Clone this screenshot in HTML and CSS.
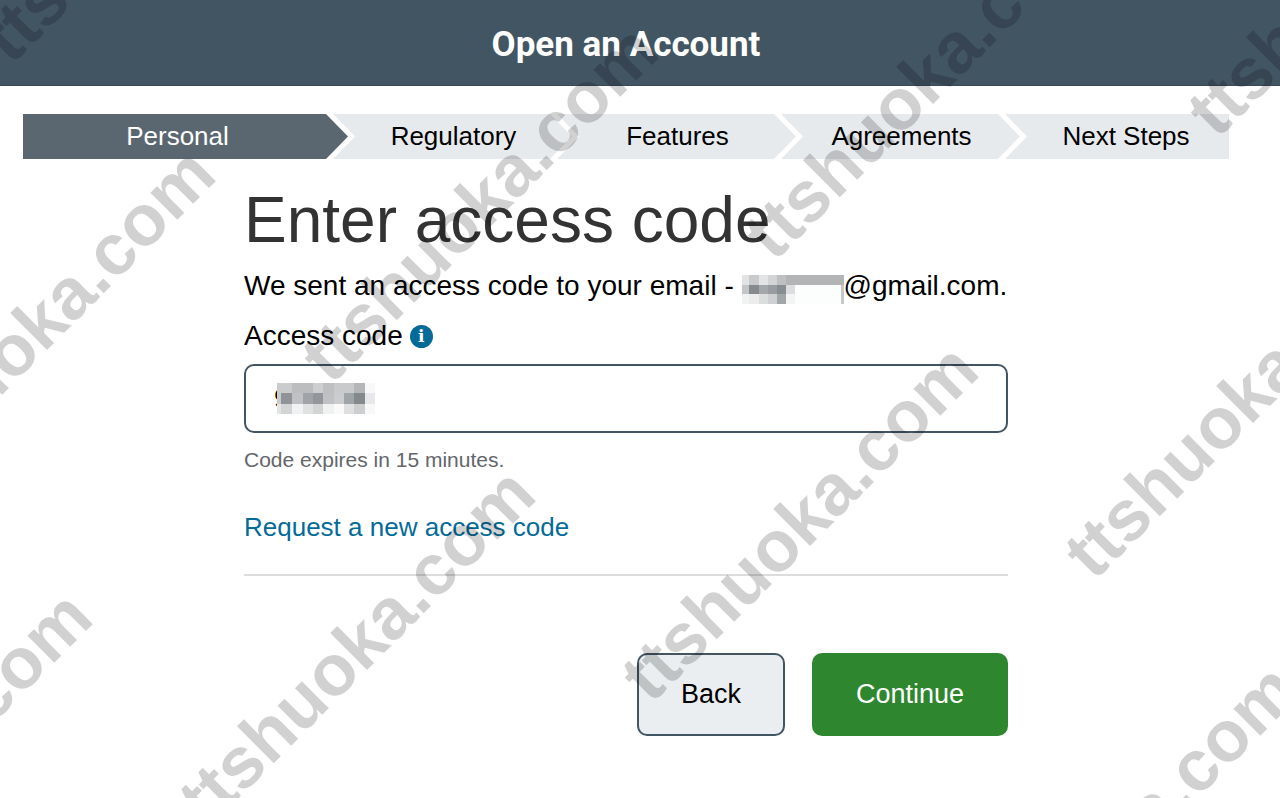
FILE: index.html
```
<!DOCTYPE html>
<html lang="en">
<head>
    <meta charset="UTF-8">
    <meta name="viewport" content="width=device-width, initial-scale=1.0">
    <title>Open an Account</title>
    <link rel="stylesheet" href="styles.css">
</head>
<body>
    <header class="header">
        <div class="title">Open an Account</div>
    </header>

    <ol class="steps">
        <li class="step first active" aria-current="step"><span>Personal</span></li>
        <li class="step"><span>Regulatory</span></li>
        <li class="step"><span>Features</span></li>
        <li class="step"><span>Agreements</span></li>
        <li class="step last"><span>Next Steps</span></li>
    </ol>

    <main class="content">
        <form class="form">
            <h1>Enter access code</h1>
            <p class="message">We sent an access code to your email - <svg class="masked-email" viewBox="0 0 104 29" preserveAspectRatio="none" shape-rendering="crispEdges" aria-hidden="true">
                <path fill="#e2e3e4" d="M0 0h7v10H0z"/>
                <path fill="#c8cacb" d="M7 0h10v10H7z"/>
                <path fill="#e3e4e5" d="M17 0h9v10h-9z"/>
                <path fill="#d3d4d5" d="M26 0h10v10H26z"/>
                <path fill="#bfc0c1" d="M36 0h9v10h-9z"/>
                <path fill="#b2b4b5" d="M45 0h59v10H45z"/>
                <path fill="#c3c5c6" d="M0 10h7v9H0z"/>
                <path fill="#858a8e" d="M7 10h10v9H7z"/>
                <path fill="#a5a8ab" d="M17 10h9v9h-9z"/>
                <path fill="#989b9f" d="M26 10h10v9H26z"/>
                <path fill="#888d91" d="M36 10h9v9h-9z"/>
                <path fill="#dcdddf" d="M45 10h9v9h-9z"/>
                <path fill="#f1f2f2" d="M0 19h7v10H0z"/>
                <path fill="#ececed" d="M7 19h10v10H7z"/>
                <path fill="#dcdddd" d="M17 19h9v10h-9z"/>
                <path fill="#cfd0d1" d="M26 19h10v10H26z"/>
                <path fill="#a3a6a8" d="M36 19h9v10h-9z"/>
                <path fill="#f3f4f4" d="M45 19h9v10h-9z"/>
                <path fill="#fcfdfd" d="M54 10h47v19H54z"/>
                <path fill="#c5c7c8" d="M101 10h3v19h-3z"/>
            </svg>@gmail.com.</p>

            <div class="label-row">
                <label for="code">Access code</label>
                <button type="button" class="info" aria-label="About the access code">i</button>
            </div>
            <div class="field">
                <input type="text" id="code" value="9" autocomplete="off">
                <svg class="masked-code" viewBox="0 0 98 31" shape-rendering="crispEdges" aria-hidden="true">
                    <path fill="#c9cbcc" d="M0 0h15v10H0z"/>
                    <path fill="#bbbdbe" d="M15 0h21v10H15z"/>
                    <path fill="#cdcecf" d="M36 0h10v10H36z"/>
                    <path fill="#bdbfc0" d="M46 0h11v10H46z"/>
                    <path fill="#c8cacb" d="M57 0h20v10H57z"/>
                    <path fill="#b4b6b7" d="M77 0h11v10H77z"/>
                    <path fill="#f8f8f8" d="M88 0h10v10H88z"/>
                    <path fill="#c9cbcc" d="M0 10h4v11H0z"/>
                    <path fill="#909499" d="M4 10h11v11H4z"/>
                    <path fill="#bfc1c4" d="M15 10h11v11H15z"/>
                    <path fill="#a1a3a6" d="M26 10h10v11H26z"/>
                    <path fill="#93979c" d="M36 10h10v11H36z"/>
                    <path fill="#bfc1c2" d="M46 10h11v11H46z"/>
                    <path fill="#cacccd" d="M57 10h10v11H57z"/>
                    <path fill="#a0a5a8" d="M67 10h10v11H67z"/>
                    <path fill="#84898c" d="M77 10h11v11H77z"/>
                    <path fill="#e6e8ea" d="M88 10h10v11H88z"/>
                    <path fill="#e3e4e5" d="M0 21h4v10H0z"/>
                    <path fill="#d3d4d4" d="M4 21h11v10H4z"/>
                    <path fill="#f1f2f3" d="M15 21h11v10H15z"/>
                    <path fill="#e0e1e2" d="M26 21h10v10H26z"/>
                    <path fill="#d3d5d5" d="M36 21h10v10H36z"/>
                    <path fill="#f0f2f2" d="M46 21h11v10H46z"/>
                    <path fill="#fafafa" d="M57 21h10v10H57z"/>
                    <path fill="#dfe0e1" d="M67 21h10v10H67z"/>
                    <path fill="#cdcecf" d="M77 21h11v10H77z"/>
                    <path fill="#f8f8f8" d="M88 21h10v10H88z"/>
                </svg>
            </div>
            <p class="hint">Code expires in 15 minutes.</p>
            <a class="resend" href="#">Request a new access code</a>
            <hr>
            <div class="buttons">
                <button type="button" class="btn back">Back</button>
                <button type="submit" class="btn continue">Continue</button>
            </div>
        </form>
    </main>

    <svg class="watermark" aria-hidden="true">
        <text transform="translate(11 66) rotate(-45)">ttshuoka.com</text>
        <text transform="translate(-112 509) rotate(-45)">ttshuoka.com</text>
        <text transform="translate(331 386) rotate(-45)">ttshuoka.com</text>
        <text transform="translate(774 263) rotate(-45)">ttshuoka.com</text>
        <text transform="translate(1217 140) rotate(-45)">ttshuoka.com</text>
        <text transform="translate(-235 952) rotate(-45)">ttshuoka.com</text>
        <text transform="translate(208 829) rotate(-45)">ttshuoka.com</text>
        <text transform="translate(651 705) rotate(-45)">ttshuoka.com</text>
        <text transform="translate(1094 582) rotate(-45)">ttshuoka.com</text>
        <text transform="translate(971 1025) rotate(-45)">ttshuoka.com</text>
    </svg>
</body>
</html>
```
FILE: styles.css
```
* {
    box-sizing: border-box;
}
body {
    margin: 0;
    font-family: "Liberation Sans", Arial, sans-serif;
    font-size: 28px;
    color: #000;
    background-color: #fff;
}
.header {
    padding: 24px 28px 20px 0;
    background-color: #425563;
    border-bottom: 1px solid #384a58;
}
.title {
    color: #fff;
    font-family: Roboto, sans-serif;
    font-size: 35px;
    font-weight: 700;
    line-height: 41px;
    text-align: center;
}

/* progress steps */
.steps {
    display: flex;
    margin: 28px 51px 0 23px;
    padding: 0;
    list-style: none;
    font-size: 26px;
    line-height: 45px;
    text-align: center;
}
.step {
    flex: 239 1 0;
    min-width: 0;
    margin-left: -15px;
    background-color: #e7eaed;
    clip-path: polygon(0 0, calc(100% - 22px) 0, 100% 50%, calc(100% - 22px) 100%, 0 100%, 22px 50%);
}
.step.first {
    flex-grow: 325;
    margin-left: 0;
    clip-path: polygon(0 0, calc(100% - 22px) 0, 100% 50%, calc(100% - 22px) 100%, 0 100%);
}
.step.last {
    flex-grow: 224;
    clip-path: polygon(0 0, 100% 0, 100% 100%, 0 100%, 22px 50%);
}
.step.active {
    color: #fff;
    background-color: #5b6770;
}
.step span {
    display: block;
    padding-left: 2px;
}
.step.first span {
    padding: 0 16px 0 0;
}
.step.last span {
    padding-left: 18px;
}

/* form */
.content {
    padding-right: 28px;
}
.form {
    max-width: 764px;
    margin: 0 auto;
}
h1 {
    margin: 25px 0 10px;
    color: #333;
    font-size: 64px;
    font-weight: 400;
    line-height: 72px;
}
.message {
    margin: 0 0 10px;
    line-height: 40px;
}
.masked-email {
    width: 102px;
    height: 29px;
    vertical-align: -9px;
}
.label-row {
    display: flex;
    align-items: center;
    gap: 7px;
    margin-bottom: 8px;
    line-height: 40px;
}
.info {
    width: 23px;
    height: 23px;
    padding: 0;
    border: none;
    border-radius: 50%;
    color: #fff;
    background-color: #046b99;
    font-family: "DejaVu Serif", serif;
    font-size: 17px;
    font-weight: 700;
    line-height: 23px;
    cursor: pointer;
}
.field {
    position: relative;
}
.field input {
    display: block;
    width: 100%;
    height: 69px;
    padding: 0 28px;
    border: 2px solid #425563;
    border-radius: 10px;
    font-family: inherit;
    font-size: 28px;
    background-color: #fff;
}
.masked-code {
    position: absolute;
    top: 19px;
    left: 33px;
    width: 98px;
    height: 31px;
}
.hint {
    margin: 13px 0 35px;
    color: #63666a;
    font-size: 21px;
    line-height: 28px;
}
.resend {
    display: block;
    color: #046b99;
    font-size: 26px;
    line-height: 36px;
    text-decoration: none;
}
.resend:hover {
    text-decoration: underline;
}
hr {
    height: 2px;
    margin: 29px 0 77px;
    border: none;
    background-color: #dcdcdc;
}
.buttons {
    display: flex;
    justify-content: flex-end;
    gap: 27px;
}
.btn {
    height: 83px;
    padding: 0 42px;
    border: 2px solid #425563;
    border-radius: 10px;
    font-family: inherit;
    font-size: 27px;
    cursor: pointer;
}
.back {
    color: #000;
    background-color: #ebeef0;
}
.continue {
    color: #fff;
    background-color: #2e872e;
    border-color: #2e872e;
}

/* diagonal site mark over the whole page */
.watermark {
    position: fixed;
    inset: 0;
    width: 100%;
    height: 100%;
    pointer-events: none;
    fill: #000;
    fill-opacity: 0.18;
    font-size: 72px;
    font-weight: 700;
}
```
